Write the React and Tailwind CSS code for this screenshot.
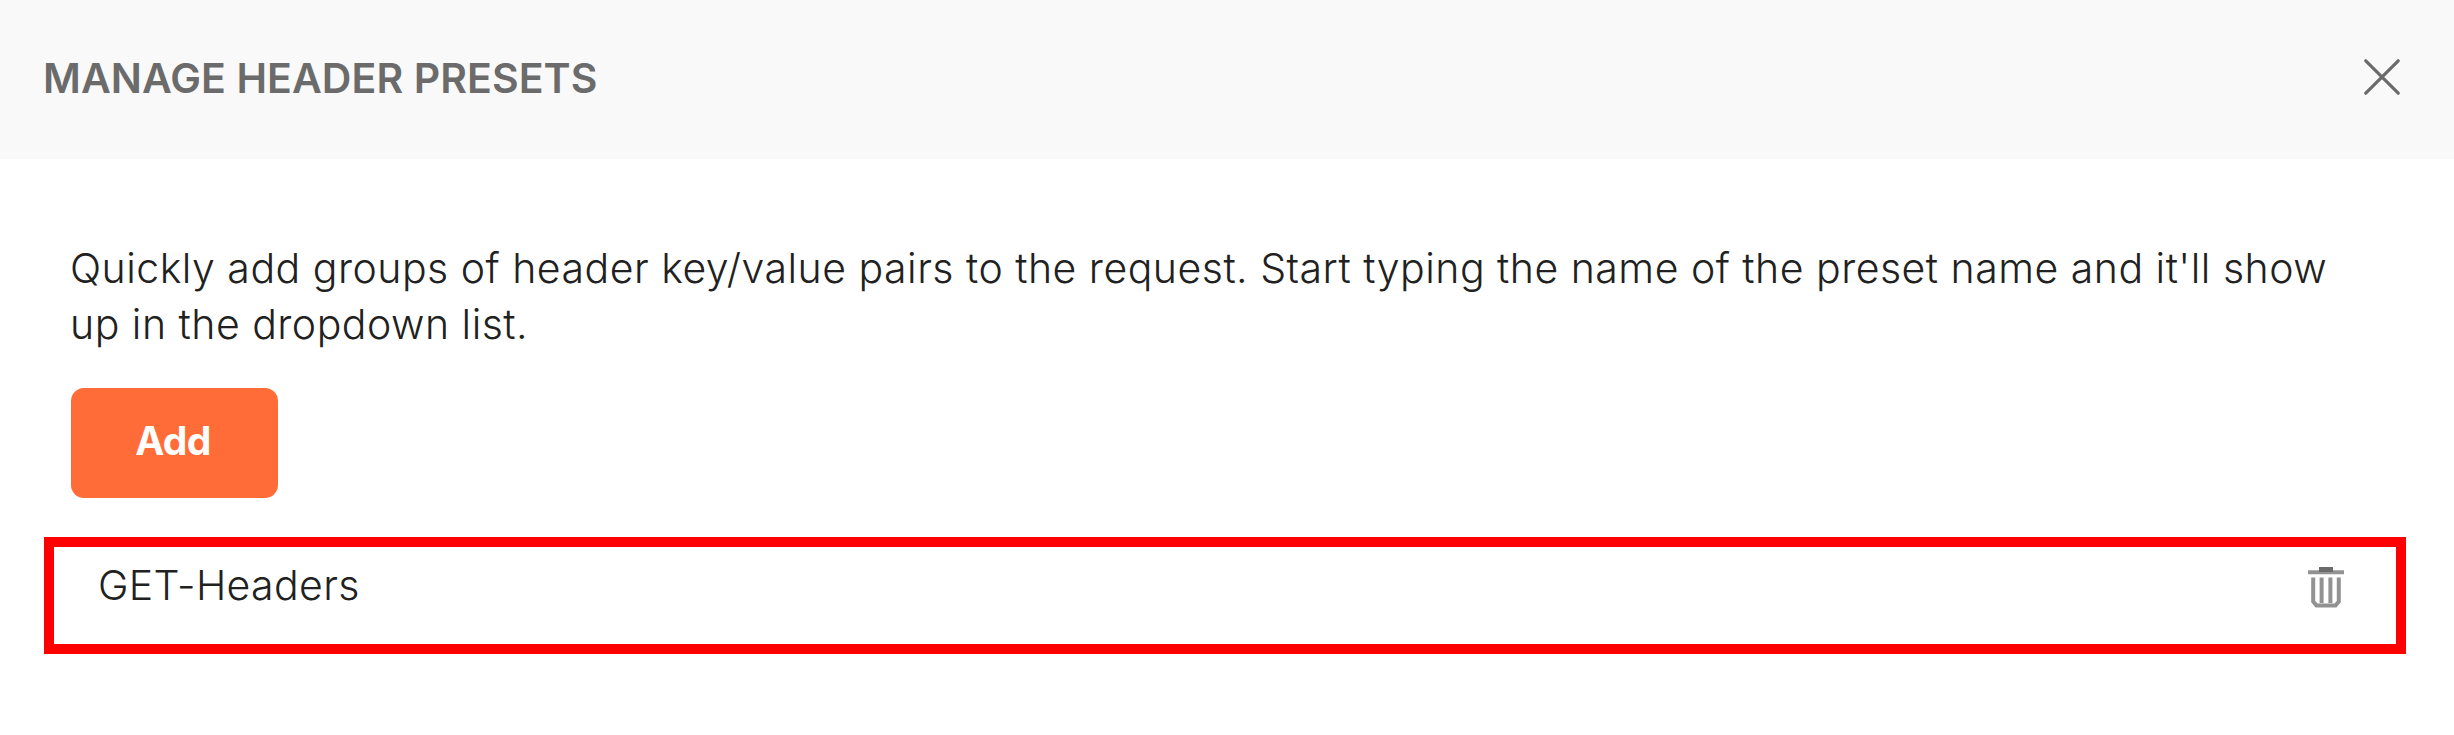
export default function App() {
  return (
    <div className="flex h-[735px] w-[2454px] flex-col bg-white font-['Inter',sans-serif] text-[#212121]">
      <header className="flex h-[159px] items-start justify-between bg-[#f9f9f9] pt-[53px] pr-[54px] pl-[43px]">
        <h1 className="text-[41px] leading-[50px] font-semibold tracking-[0.08px] whitespace-nowrap text-[#6b6b6b]">MANAGE HEADER PRESETS</h1>
        <svg className="mt-[6px] h-[36px] w-[36px]" viewBox="0 0 36 36" fill="none" stroke="#6b6b6b" strokeWidth="3.2" strokeLinecap="round"><path d="M1.8 1.8L34.2 34.2M34.2 1.8L1.8 34.2" /></svg>
      </header>
      <main className="flex flex-col items-start pt-[82px]">
        <p className="ml-[70px] text-[41px] leading-[55.5px] font-light tracking-[0.49px] whitespace-nowrap">
          <span className="block">Quickly add groups of header key/value pairs to the request. Start typing the name of the preset name and it'll show</span>
          <span className="block">up in the dropdown list.</span>
        </p>
        <button className="mt-[36px] ml-[71px] h-[110px] w-[207px] rounded-[13px] bg-[#ff6c37] pr-[3px] pb-[4px] text-[39px] font-bold tracking-[-0.6px] text-white">Add</button>
        <div className="mt-[39px] ml-[44px] flex h-[117px] w-[2362px] items-start justify-between border-[10px] border-[#ff0000] pt-[10px] pr-[52px] pl-[44px]">
          <span className="text-[41px] leading-[56px] font-light tracking-[0.35px]">GET-Headers</span>
          <svg className="mt-[9px] h-[44px] w-[36px]" viewBox="0 0 36 44" fill="none" stroke="#929292" strokeWidth="4">
            <path d="M0 6.2H36M5.2 11.5V35.5L8.5 39.5H27.5L30.8 35.5V11.5M13.6 11.5V37M22.4 11.5V37" />
            <path d="M11 3.5H25" stroke="#6b6b6b" strokeWidth="5" />
          </svg>
        </div>
      </main>
    </div>
  );
}
